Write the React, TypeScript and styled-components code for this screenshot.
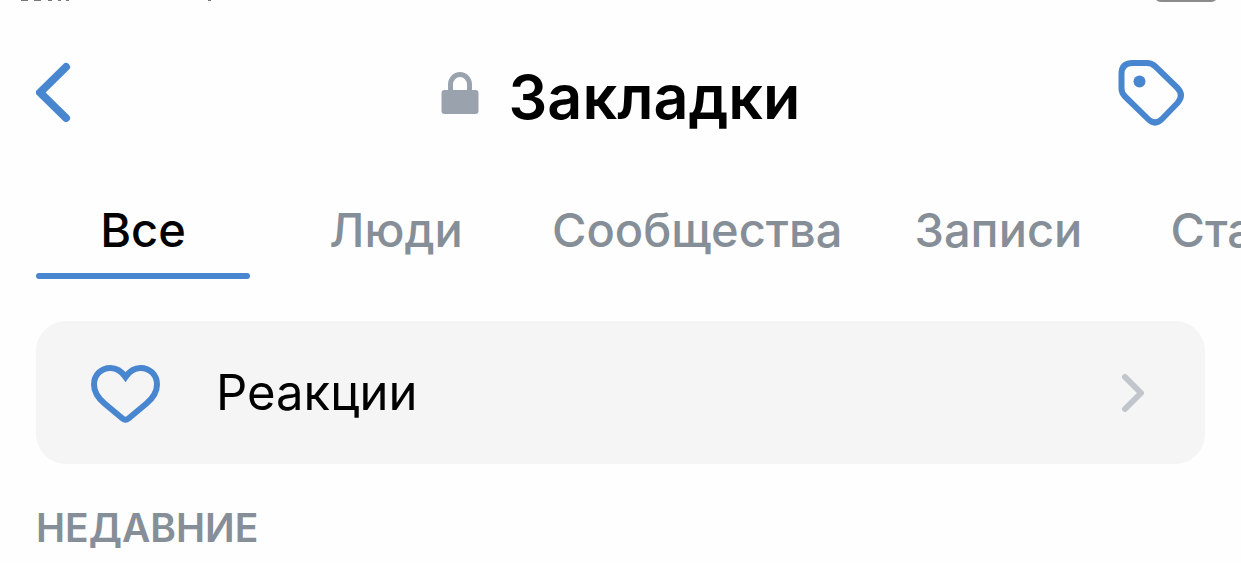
import React, { useState } from "react";
import styled, { createGlobalStyle } from "styled-components";

const blue = "#4986d0";
const grey = "#868e98";

const GlobalStyle = createGlobalStyle`
  *, *::before, *::after { box-sizing: border-box; }
  body {
    margin: 0;
    background: #fefefe;
    color: #000;
    font-family: Inter, "Noto Sans", sans-serif;
    overflow-x: hidden;
  }
  button { font: inherit; color: inherit; background: none; border: 0; padding: 0; cursor: pointer; }
`;

const Screen = styled.main`
  overflow: hidden;
`;

const StatusBar = styled.div`
  display: flex;
  justify-content: space-between;
  height: 2px;
  padding: 0 24px 0 16px;
`;

const Header = styled.header`
  display: grid;
  grid-template-columns: 72px 1fr 72px;
  align-items: center;
  height: 182px;
  padding: 0 36px;
`;

const IconButton = styled.button<{ $end?: boolean }>`
  display: flex;
  justify-self: ${(p) => (p.$end ? "end" : "start")};
  margin-right: ${(p) => (p.$end ? "20px" : "0")};
`;

const TitleGroup = styled.div`
  display: flex;
  align-items: center;
  justify-content: center;
  gap: 30px;
`;

const Title = styled.h1`
  margin: 0;
  padding-top: 8px;
  font-size: 61px;
  line-height: 72px;
  font-weight: 600;
`;

const Tabs = styled.nav`
  display: flex;
  gap: 39px;
  height: 95px;
  padding-left: 36px;
  overflow: hidden;
`;

const Tab = styled.button<{ $active: boolean }>`
  display: flex;
  flex: none;
  flex-direction: column;
  justify-content: space-between;
  min-width: 214px;
  color: ${(p) => (p.$active ? "#000" : grey)};
  font-size: 47px;
  line-height: 60px;
  font-weight: 500;

  &::after {
    content: "";
    width: 100%;
    height: 6px;
    border-radius: 3px;
    background: ${(p) => (p.$active ? blue : "transparent")};
  }
`;

const TabLabel = styled.span`
  align-self: center;
  padding: 16px 10px 0;
`;

const Content = styled.section`
  padding: 42px 36px 0;
`;

const Row = styled.button`
  display: flex;
  align-items: center;
  width: 100%;
  height: 143px;
  padding: 0 58px 0 52px;
  border-radius: 30px;
  background: #f5f5f5;
  text-align: left;
`;

const RowLabel = styled.span`
  flex: 1;
  padding-left: 52px;
  font-size: 49px;
  line-height: 60px;
`;

const SectionTitle = styled.h2`
  margin: 0;
  padding: 40px 0 10px;
  color: ${grey};
  font-size: 39px;
  line-height: 48px;
  font-weight: 600;
`;

const tabs = ["Все", "Люди", "Сообщества", "Записи", "Статьи"];

export default function App() {
  const [active, setActive] = useState("Все");
  return (
    <>
      <GlobalStyle />
      <Screen>
        <StatusBar aria-hidden="true">
          <svg width="200" height="2" viewBox="0 0 200 2" fill="none" stroke="#777">
            <path d="M5 .5h7M18 .5h7M32 .5h4M42 .5h3M50 .5h3M192 .5h3" />
          </svg>
          <svg width="62" height="2" viewBox="0 0 62 2">
            <path d="M1 0h60q-2 2-5 2H6q-3 0-5-2z" fill="#8c8c8c" />
          </svg>
        </StatusBar>
        <Header>
          <IconButton aria-label="Назад">
            <svg width="36" height="62" viewBox="0 0 36 62" fill="none" stroke={blue} strokeWidth="8" strokeLinecap="round" strokeLinejoin="round">
              <path d="M30 5 4 30.5 30 56" />
            </svg>
          </IconButton>
          <TitleGroup>
            <svg width="38" height="44" viewBox="0 0 38 44" aria-hidden="true">
              <path d="M9.500 20V13.500a9.500 10 0 0 1 19 0V20" fill="none" stroke="#99a2ad" strokeWidth="5" />
              <rect x="0.5" y="19" width="37" height="24" rx="3" fill="#99a2ad" />
            </svg>
            <Title>Закладки</Title>
          </TitleGroup>
          <IconButton $end aria-label="Метки">
            <svg width="68" height="68" viewBox="0 0 68 68" fill="none">
              <path d="M15.500 4H30q4.500 0 8 3.200L60 28.500q7.500 7.500.5 15.500L45 60q-7 7-14 0L8 37.500q-3.500-3.500-3.500-8V15Q4.500 4 15.500 4z" stroke={blue} strokeWidth="6" strokeLinejoin="round" />
              <circle cx="22.500" cy="22.500" r="6" fill={blue} />
            </svg>
          </IconButton>
        </Header>
        <Tabs>
          {tabs.map((name) => (
            <Tab key={name} $active={name === active} onClick={() => setActive(name)}>
              <TabLabel>{name}</TabLabel>
            </Tab>
          ))}
        </Tabs>
        <Content>
          <Row>
            <svg width="76" height="64" viewBox="0 0 76 64" fill="none" stroke={blue} strokeWidth="6" strokeLinejoin="miter" aria-hidden="true">
              <path d="M37.500 16C33 9.500 28.500 7 22.500 7 13 7 6 14 6 23.500c0 7.500 4 13.500 10.500 19L34.500 57.500q3 2.500 6 0L58.500 42.500c6.500-5.500 10.500-11.500 10.500-19C69 14 62 7 52.500 7c-6 0-10.500 2.500-15 9z" />
            </svg>
            <RowLabel>Реакции</RowLabel>
            <svg width="28" height="40" viewBox="0 0 28 40" fill="none" stroke="#c1c6cc" strokeWidth="6" strokeLinecap="round" strokeLinejoin="round" aria-hidden="true">
              <path d="M6 4 22 20 6 36" />
            </svg>
          </Row>
          <SectionTitle>НЕДАВНИЕ</SectionTitle>
        </Content>
      </Screen>
    </>
  );
}
